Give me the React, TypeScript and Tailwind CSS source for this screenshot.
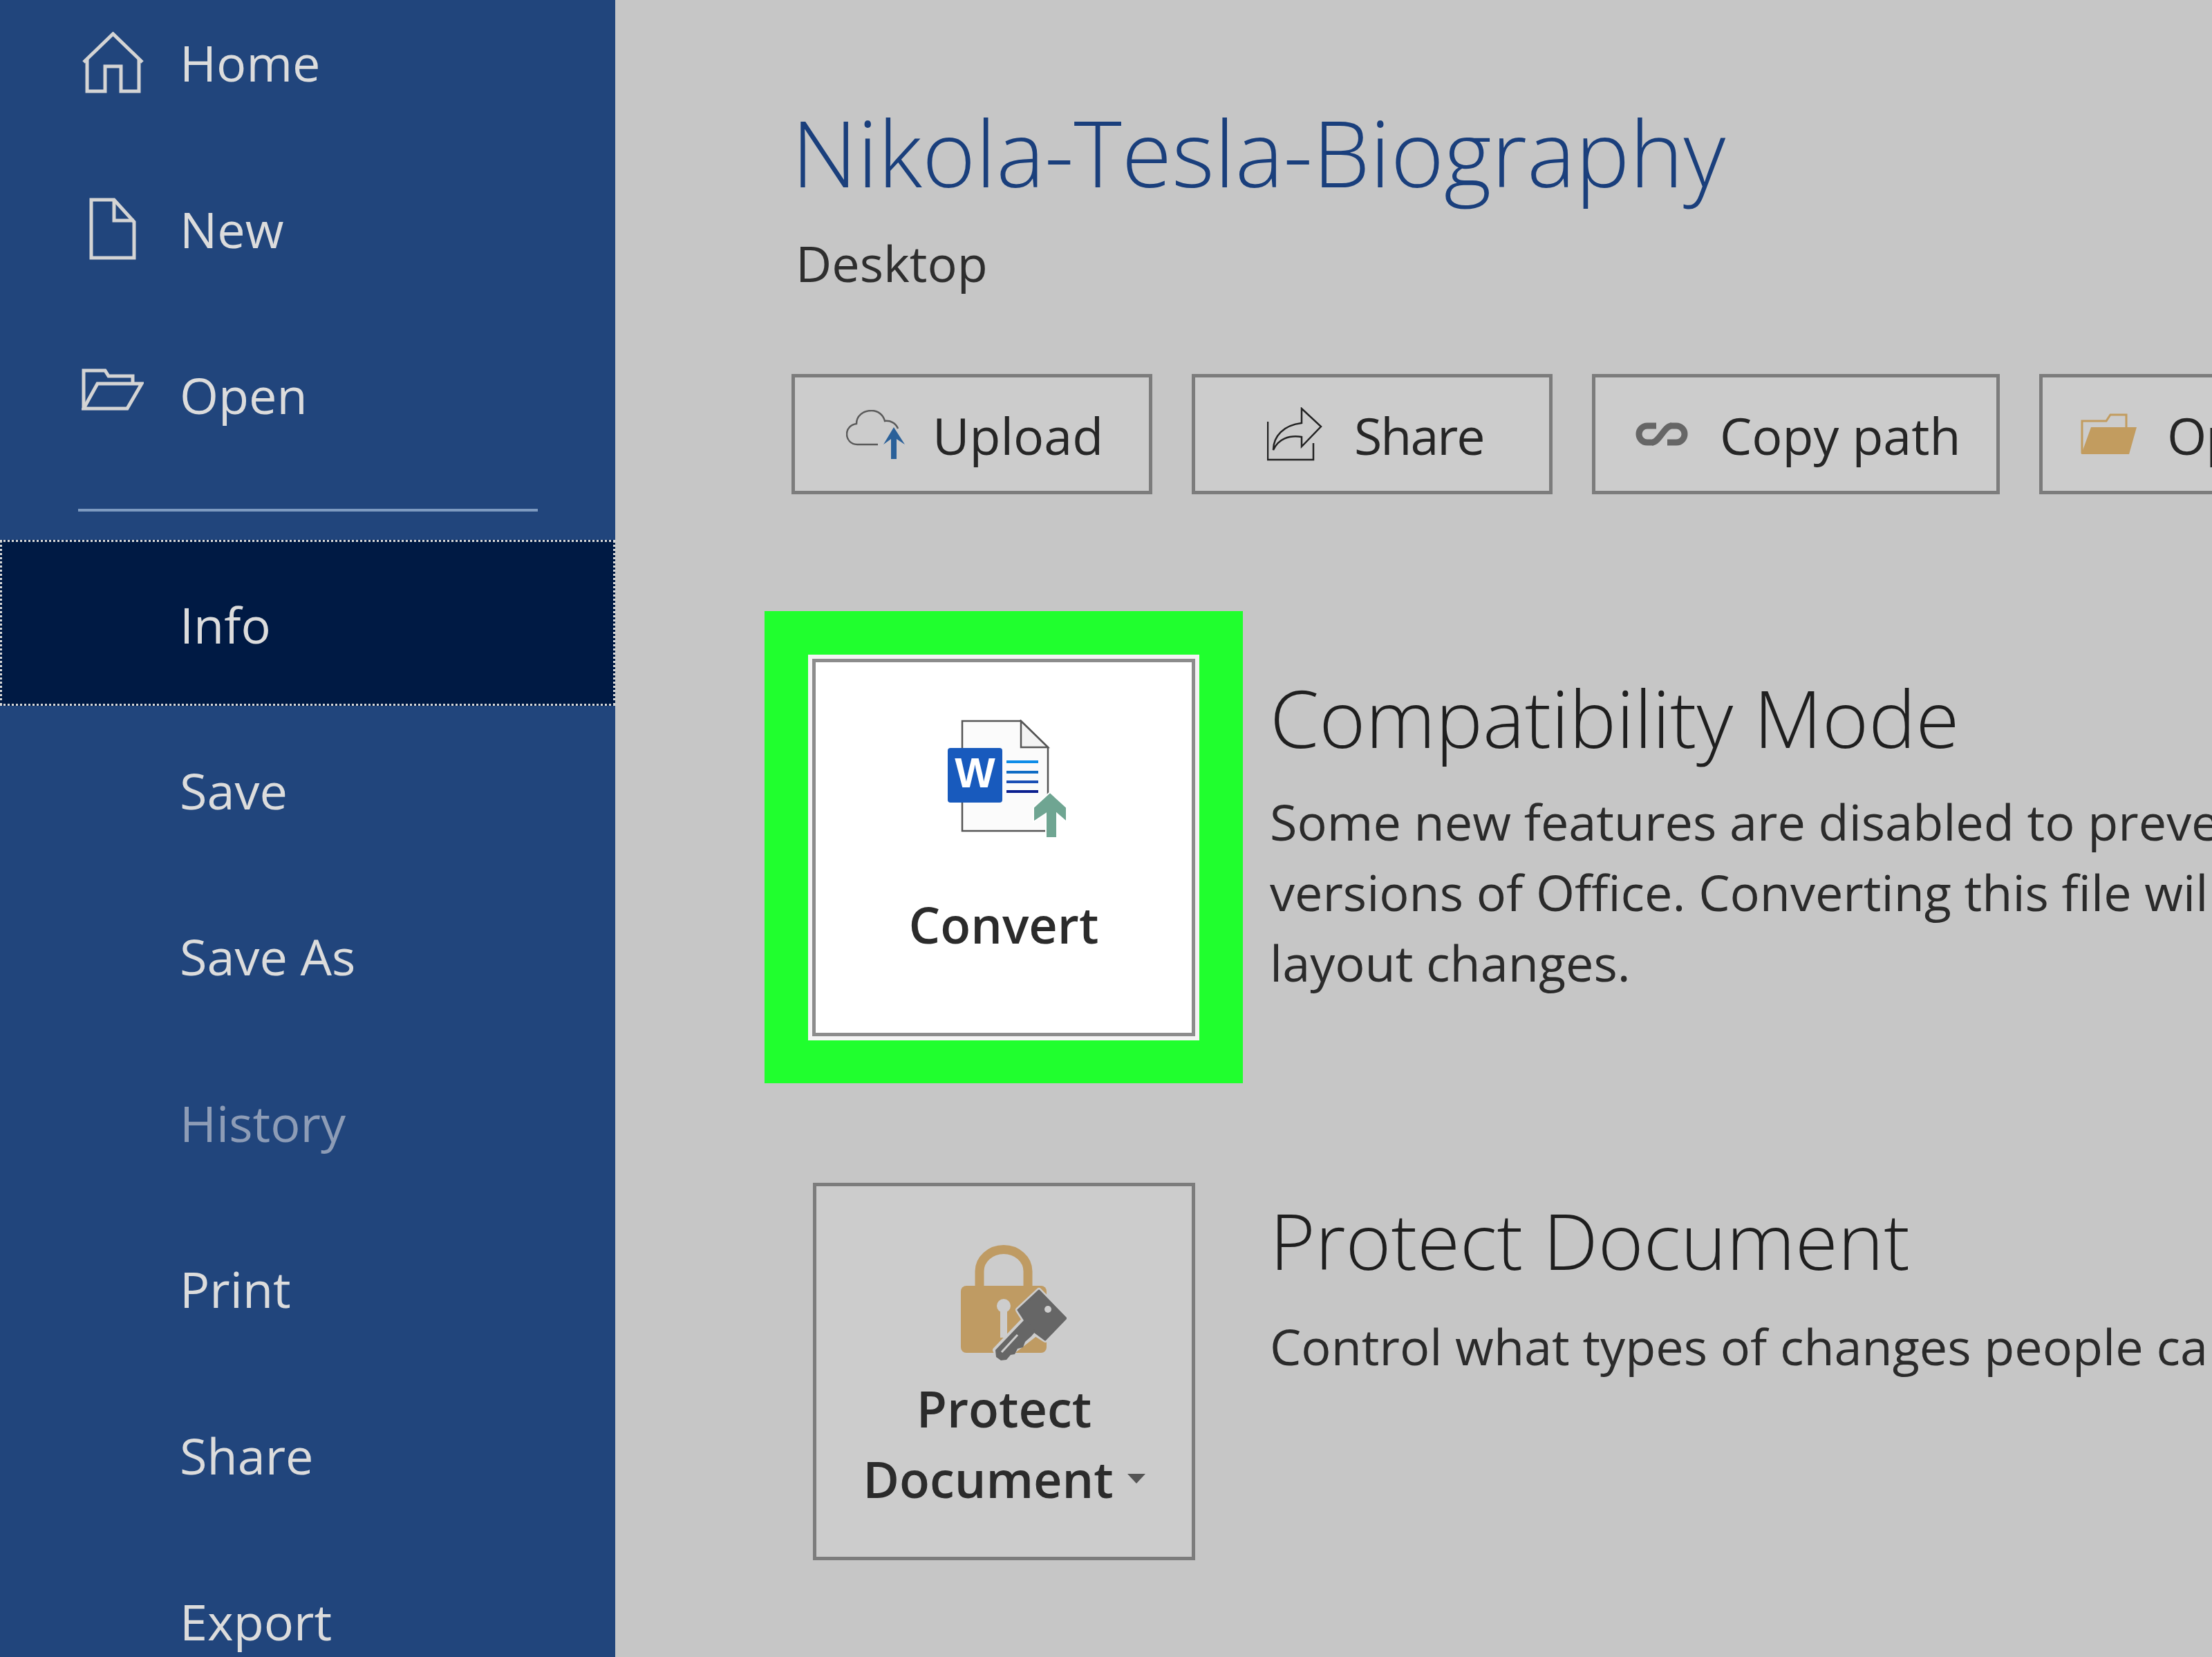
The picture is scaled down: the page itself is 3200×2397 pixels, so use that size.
import type { ReactNode } from "react";

const font = "font-['Open_Sans','Noto_Sans',sans-serif]";

function HomeIcon() {
  return (
    <svg width="89" height="89" viewBox="0 0 89 89" fill="none" stroke="#d4d4d4" strokeWidth="5">
      <path d="M2 44L44.5 3L87 44" />
      <path d="M7 40V86H33V50H56V86H82V40" />
    </svg>
  );
}

function NewIcon() {
  return (
    <svg width="68" height="90" viewBox="0 0 68 90" fill="none" stroke="#d4d4d4" strokeWidth="5">
      <path d="M3 3H36L65 35V87H3Z" />
      <path d="M36 3V33H65" />
    </svg>
  );
}

function OpenIcon() {
  return (
    <svg width="90" height="62" viewBox="0 0 90 62" fill="none" stroke="#d4d4d4" strokeWidth="5" className="-mt-[14px]">
      <path d="M3 58V3H34L39 11H74V21" />
      <path d="M3 58L23 22H87L66 58Z" />
    </svg>
  );
}

function UploadIcon() {
  return (
    <svg width="85" height="71" viewBox="0 0 85 71" fill="none" className="shrink-0">
      <path
        d="M46 50H16C7 50 1 43 1 35C1 27 7 21 15 20C15 9 24 1 37 1C47 1 54 8 56 16C64 15 72 19 75 27"
        stroke="#5a5a5a"
        strokeWidth="2.5"
      />
      <path d="M69 25L85 50L73 42V71H65V42L54 50Z" fill="#2a6099" />
    </svg>
  );
}

function ShareIcon() {
  return (
    <svg width="80" height="78" viewBox="0 0 80 78" fill="none" stroke="#222" strokeWidth="2.5" className="shrink-0">
      <path d="M1 21V76H67V52" />
      <path d="M9 62C9 42 24 26 50 23V2L78 28L50 57V43C32 40 16 46 9 62Z" />
    </svg>
  );
}

function LinkIcon() {
  return (
    <svg width="76" height="34" viewBox="0 0 76 34" fill="none" stroke="#666" strokeWidth="9" className="shrink-0">
      <path d="M30 5H17a12 12 0 0 0 0 24h9" />
      <path d="M46 29H59a12 12 0 0 0 0-24h-9" />
      <path d="M24 29C34 29 42 5 52 5" />
    </svg>
  );
}

function FolderIcon() {
  return (
    <svg width="82" height="60" viewBox="0 0 82 60" fill="none" className="shrink-0">
      <path d="M2 58V11H37L43 2H66V20" stroke="#c29c5f" strokeWidth="3" />
      <path d="M15 20H81L70 59H1Z" fill="#c29c5f" />
    </svg>
  );
}

function ConvertIcon() {
  return (
    <svg width="172" height="172" viewBox="0 0 172 172" fill="none" className="ml-[10px]">
      <path d="M21 2H106L145 40V161H21Z" fill="#fbfbfb" stroke="#555" strokeWidth="2.5" />
      <path d="M106 2V40H145Z" fill="#f3f3f3" stroke="#555" strokeWidth="2.5" />
      <rect x="0" y="41" width="79" height="79" rx="4" fill="#185abd" />
      <text x="39.5" y="98" textAnchor="middle" fontFamily="Liberation Sans" fontWeight="700" fontSize="62" fill="#fff">
        W
      </text>
      <rect x="85" y="59" width="46" height="4" fill="#0e8de8" />
      <rect x="85" y="74" width="46" height="4" fill="#0f6cc4" />
      <rect x="85" y="88" width="46" height="4" fill="#1a4fb5" />
      <rect x="85" y="102" width="46" height="4" fill="#0b1f8f" />
      <path d="M148 105L172 127V148L158 136V171H142V136L124 148V127Z" fill="#6fa592" stroke="#fff" strokeWidth="2" />
    </svg>
  );
}

function LockIcon() {
  return (
    <svg width="153" height="168" viewBox="0 0 153 168" fill="none" className="ml-[28px]">
      <path d="M27 62V38A35 31.5 0 0 1 97 38V62" stroke="#bf9b63" strokeWidth="13" />
      <rect x="0" y="59" width="124" height="97" rx="8" fill="#bf9b63" />
      <circle cx="62" cy="88" r="10" fill="#cdcdcd" />
      <rect x="57" y="90" width="10" height="44" fill="#cdcdcd" />
      <path
        d="M113 66L152 106L122 137L108 128L58 167L50 152L92 108L83 94Z"
        fill="#cdcdcd"
        stroke="#cdcdcd"
        strokeWidth="8"
        strokeLinejoin="round"
      />
      <path d="M113 66L152 106L122 137L106 125L92 108L83 94Z" fill="#666" stroke="#666" strokeWidth="3" strokeLinejoin="round" />
      <path d="M92 108L50 152L51 162L58 167L66 166L72 159L78 158L82 150L90 148L93 140L102 132L108 125Z" fill="#666" />
      <path d="M82 130L59 155" stroke="#cdcdcd" strokeWidth="3" />
      <circle cx="126" cy="93" r="5" fill="#cdcdcd" />
    </svg>
  );
}

function NavRow({ label, icon, dim }: { label: string; icon?: ReactNode; dim?: boolean }) {
  return (
    <div className="flex h-[240.5px] items-center">
      <div className="flex w-[260px] shrink-0 justify-center pl-[66px]">{icon}</div>
      <span className={`text-[72px] leading-none ${dim ? "text-[#8d9cb6]" : "text-[#dcdcdc]"}`}>{label}</span>
    </div>
  );
}

function ActionButton({ cls, icon, label }: { cls: string; icon: ReactNode; label: string }) {
  return (
    <div className={`flex h-[174px] shrink-0 items-center border-[5px] border-[#7c7c7c] bg-[#cccccc] text-[73.5px] text-[#262626] ${cls}`}>
      {icon}
      <span className="mt-[4px] whitespace-nowrap leading-none">{label}</span>
    </div>
  );
}

export default function App() {
  return (
    <div className={`flex h-[2397px] w-[3200px] overflow-hidden bg-[#c6c6c6] ${font}`}>
      <aside className="w-[890px] shrink-0 overflow-hidden bg-[#21457c]">
        <div className="-mt-[30px]">
          <NavRow label="Home" icon={<HomeIcon />} />
          <NavRow label="New" icon={<NewIcon />} />
          <NavRow label="Open" icon={<OpenIcon />} />
        </div>
        <div className="ml-[113px] mt-[44px] h-[4px] w-[665px] bg-[#7d9ac0]" />
        <div className="mt-[41px] flex h-[240px] items-center border-[3px] border-dotted border-[#d8d8d8] bg-[#001a44] pl-[257px] pt-[4px] text-[72px] leading-none text-[#dcdcdc]">
          Info
        </div>
        <div className="mt-[2px]">
          <NavRow label="Save" />
          <NavRow label="Save As" />
          <NavRow label="History" dim />
          <NavRow label="Print" />
          <NavRow label="Share" />
          <NavRow label="Export" />
        </div>
      </aside>

      <main className="min-w-0 flex-1 overflow-hidden pl-[216px] pt-[135px]">
        <h1 className="ml-[39px] whitespace-nowrap text-[132px] font-light leading-[170px] text-[#1a3f7c]">
          Nikola-Tesla-Biography
        </h1>
        <p className="ml-[45px] mt-[25px] text-[72px] leading-[100px] text-[#2e2e2e]">Desktop</p>

        <div className="ml-[39px] mt-[111px] flex gap-[57px]">
          <ActionButton cls="w-[522px] gap-[40px] pl-[74px]" icon={<UploadIcon />} label="Upload" />
          <ActionButton cls="w-[522px] gap-[46px] pl-[104px] tracking-[-2px]" icon={<ShareIcon />} label="Share" />
          <ActionButton cls="w-[590px] gap-[46px] pl-[58px]" icon={<LinkIcon />} label="Copy path" />
          <ActionButton cls="w-[900px] gap-[43px] pl-[55px] tracking-[-1px]" icon={<FolderIcon />} label="Open file location" />
        </div>

        <section className="mt-[169px] flex gap-[39px]">
          <div className="h-[683px] w-[692px] shrink-0 bg-[#20ff2e] pb-[62px] pl-[63px] pr-[63px] pt-[63px]">
            <div className="h-full bg-[#f4f4f4] p-[6px]">
              <div className="flex h-full flex-col items-center border-[5px] border-[#8c8c8c] bg-white pt-[83px]">
                <ConvertIcon />
                <span className="mt-[88px] text-[72px] font-semibold leading-none text-[#2b2b2b]">Convert</span>
              </div>
            </div>
          </div>
          <div className="whitespace-nowrap pt-[89px]">
            <h2 className="text-[114.7px] font-light leading-[130px] text-[#1f1f1f]">Compatibility Mode</h2>
            <p className="mt-[34px] text-[72px] leading-[102px] text-[#2b2b2b]">
              Some new features are disabled to prevent problems when working with previous
              <br />
              versions of Office. Converting this file will enable these features, but may result in
              <br />
              layout changes.
            </p>
          </div>
        </section>

        <section className="ml-[70px] mt-[144px] flex gap-[108px]">
          <div className="flex h-[546px] w-[553px] shrink-0 flex-col items-center border-[5px] border-[#7c7c7c] bg-[#cccccc] pt-[85px]">
            <LockIcon />
            <span className="mt-[17px] text-[72px] font-semibold leading-[102px] text-[#2b2b2b]">Protect</span>
            <span className="flex items-center gap-[20px] text-[72px] font-semibold leading-[102px] text-[#2b2b2b]">
              Document
              <span className="h-0 w-0 border-x-[13px] border-t-[14px] border-x-transparent border-t-[#555]" />
            </span>
          </div>
          <div className="whitespace-nowrap pt-[18px]">
            <h2 className="text-[112.5px] font-light leading-[130px] text-[#1f1f1f]">Protect Document</h2>
            <p className="mt-[37px] text-[72px] leading-[102px] text-[#2b2b2b]">
              Control what types of changes people can make to this document.
            </p>
          </div>
        </section>
      </main>
    </div>
  );
}
